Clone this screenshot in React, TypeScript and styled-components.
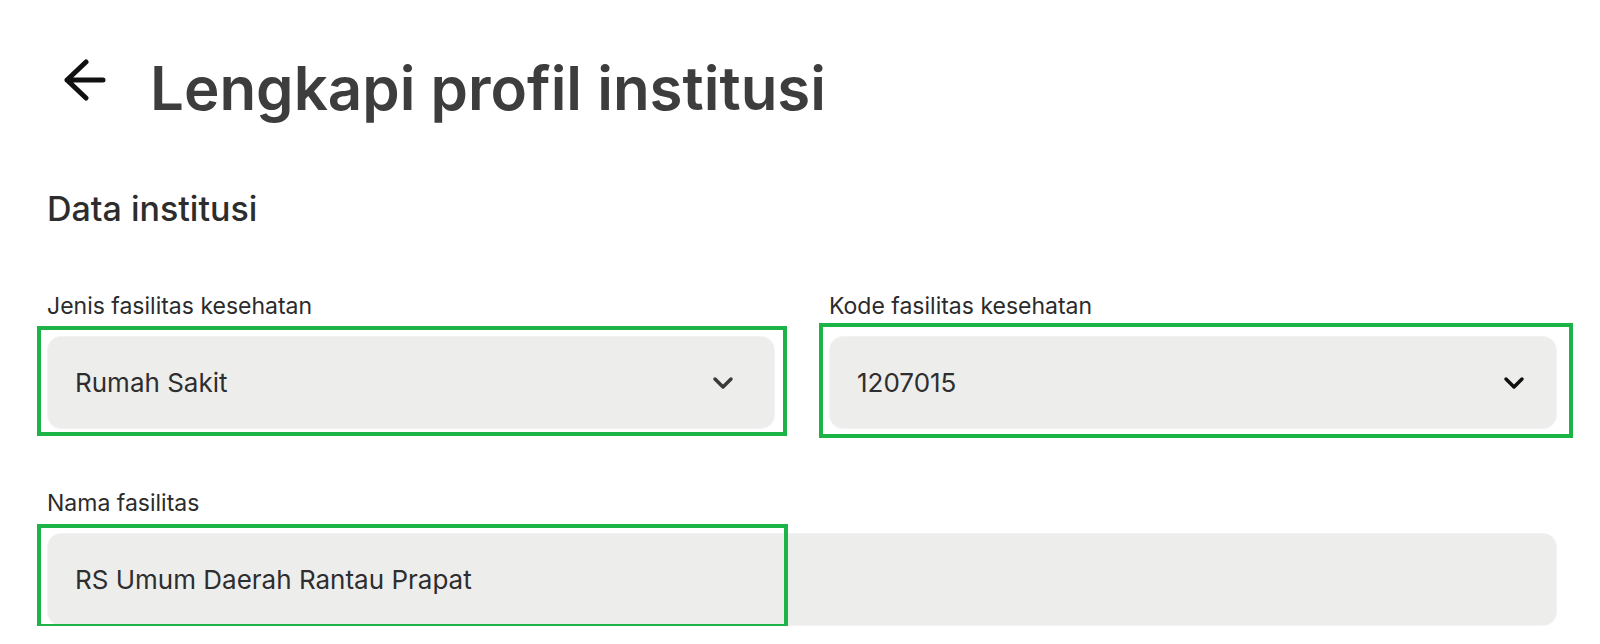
import React from 'react'
import styled, { createGlobalStyle } from 'styled-components'

const GlobalStyle = createGlobalStyle`
  html, body {
    margin: 0;
    padding: 0;
    background: #ffffff;
  }
  body {
    font-family: Inter, "Noto Sans", sans-serif;
    color: #2d2d2d;
  }
`

const Page = styled.main`
  padding: 0 43px 0 47px;
`

const Header = styled.header`
  display: flex;
  align-items: flex-start;
  gap: 43px;
  padding: 58px 0 0 16px;
`

const BackButton = styled.button`
  display: flex;
  margin-top: 1px;
  padding: 0;
  border: none;
  background: none;
  cursor: pointer;
  svg {
    display: block;
  }
`

const Title = styled.h1`
  margin: 0;
  font-size: 60px;
  line-height: 1;
  font-weight: 600;
  color: #3d3d3d;
`

const SectionTitle = styled.h2`
  margin: 74px 0 0;
  font-size: 34px;
  line-height: 1;
  font-weight: 500;
  color: #2d2d2d;
`

const FormGrid = styled.div`
  display: grid;
  grid-template-columns: 1fr 1fr;
  column-gap: 54px;
  row-gap: 63px;
  margin-top: 69px;
`

const Field = styled.div<{ $wide?: boolean }>`
  display: flex;
  flex-direction: column;
  gap: 18px;
  grid-column: ${(p) => (p.$wide ? '1 / -1' : 'auto')};
`

const Label = styled.label`
  font-size: 23px;
  line-height: 1;
  font-weight: 400;
  color: #2b2b2b;
`

const BoxWrap = styled.div`
  position: relative;
`

const InputBox = styled.div<{ $padRight?: number }>`
  display: flex;
  align-items: center;
  justify-content: space-between;
  height: 93px;
  box-sizing: border-box;
  padding: 0 ${(p) => p.$padRight ?? 32}px 0 27px;
  background: #ededec;
  border: 1.5px solid #f3f3f3;
  border-radius: 14px;
  font-size: 26px;
  color: #2e2e2e;
`

const Chevron = styled.svg<{ $tone: string }>`
  display: block;
  color: ${(p) => p.$tone};
`

type Inset = { top: number; left: number; bottom: number; right?: number; width?: number }

const Highlight = styled.div<{ $inset: Inset }>`
  position: absolute;
  top: ${(p) => p.$inset.top}px;
  left: ${(p) => p.$inset.left}px;
  bottom: ${(p) => p.$inset.bottom}px;
  ${(p) => (p.$inset.width !== undefined ? `width: ${p.$inset.width}px;` : `right: ${p.$inset.right}px;`)}
  border: 4px solid #1db447;
  pointer-events: none;
`

const ArrowLeft = () => (
  <svg width="44" height="42" viewBox="0 0 44 42" fill="none">
    <path
      d="M40 21H4M23 3L4 21l19 18"
      stroke="#111111"
      strokeWidth="5"
      strokeLinecap="round"
      strokeLinejoin="round"
    />
  </svg>
)

const ChevronDown = ({ tone }: { tone: string }) => (
  <Chevron $tone={tone} width="22" height="14" viewBox="0 0 22 14" fill="none">
    <path
      d="M3 3l8 8 8-8"
      stroke="currentColor"
      strokeWidth="3.5"
      strokeLinecap="round"
      strokeLinejoin="round"
    />
  </Chevron>
)

export default function App() {
  return (
    <>
      <GlobalStyle />
      <Page>
        <Header>
          <BackButton aria-label="Kembali">
            <ArrowLeft />
          </BackButton>
          <Title>Lengkapi profil institusi</Title>
        </Header>

        <SectionTitle>Data institusi</SectionTitle>

        <FormGrid>
          <Field>
            <Label>Jenis fasilitas kesehatan</Label>
            <BoxWrap>
              <InputBox $padRight={40}>
                Rumah Sakit
                <ChevronDown tone="#3a3a3a" />
              </InputBox>
              <Highlight $inset={{ top: -10, left: -10, bottom: -7, right: -12 }} />
            </BoxWrap>
          </Field>

          <Field>
            <Label>Kode fasilitas kesehatan</Label>
            <BoxWrap>
              <InputBox $padRight={31}>
                1207015
                <ChevronDown tone="#111111" />
              </InputBox>
              <Highlight $inset={{ top: -13, left: -10, bottom: -9, right: -16 }} />
            </BoxWrap>
          </Field>

          <Field $wide>
            <Label>Nama fasilitas</Label>
            <BoxWrap>
              <InputBox>RS Umum Daerah Rantau Prapat</InputBox>
              <Highlight $inset={{ top: -9, left: -10, bottom: -2, width: 743 }} />
            </BoxWrap>
          </Field>
        </FormGrid>
      </Page>
    </>
  )
}
